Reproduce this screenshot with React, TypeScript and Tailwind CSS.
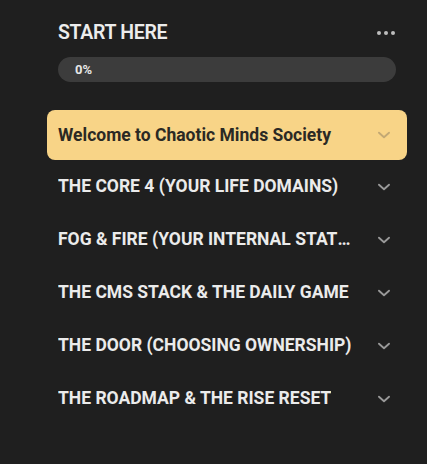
import React from "react";

const Chevron = ({ className = "" }: { className?: string }) => (
  <svg viewBox="0 0 24 24" width="22" height="22" fill="none" stroke="currentColor" strokeWidth="2" strokeLinecap="round" strokeLinejoin="round" className={className}>
    <path d="M6.5 9.5l5.5 5 5.5-5" />
  </svg>
);

const items = [
  "THE CORE 4 (YOUR LIFE DOMAINS)",
  "FOG & FIRE (YOUR INTERNAL STATES)",
  "THE CMS STACK & THE DAILY GAME",
  "THE DOOR (CHOOSING OWNERSHIP)",
  "THE ROADMAP & THE RISE RESET",
];

export default function App() {
  return (
    <div className="w-[427px] h-[464px] bg-[#1f1f1f] overflow-hidden" style={{ fontFamily: "Roboto, 'Liberation Sans', sans-serif" }}>
      <div className="ml-[47px] w-[360px] pt-[22px]">
        <div className="px-[11px]">
          <div className="flex items-center justify-between h-[22px]">
            <span className="text-[19.5px] font-semibold text-[#ececec] tracking-[-0.3px]">START HERE</span>
            <div className="flex gap-[3px] mr-[1px]">
              <span className="w-[4px] h-[4px] rounded-full bg-[#bdbdbd]" />
              <span className="w-[4px] h-[4px] rounded-full bg-[#bdbdbd]" />
              <span className="w-[4px] h-[4px] rounded-full bg-[#bdbdbd]" />
            </div>
          </div>
          <div className="mt-[13px] h-[25px] w-[338px] rounded-full bg-[#3c3c3c] flex items-center pl-[17px]">
            <span className="text-[13px] font-bold text-[#e6e6e6]">0%</span>
          </div>
        </div>
        <div className="mt-[28px] flex flex-col">
          <div className="h-[50px] rounded-[8px] bg-[#f8d487] flex items-center justify-between pl-[11px] pr-[12px]">
            <span className="text-[17.5px] font-bold text-[#2b2924]">Welcome to Chaotic Minds Society</span>
            <Chevron className="text-[#c2a874] shrink-0" />
          </div>
          {items.map((t) => (
            <div key={t} className="h-[53px] flex items-center justify-between pl-[11px] pr-[12px] first:mt-[1px]">
              <span className="text-[17.5px] font-bold text-[#ebebeb] truncate max-w-[298px]">{t}</span>
              <Chevron className="text-[#999999] shrink-0" />
            </div>
          ))}
        </div>
      </div>
    </div>
  );
}
